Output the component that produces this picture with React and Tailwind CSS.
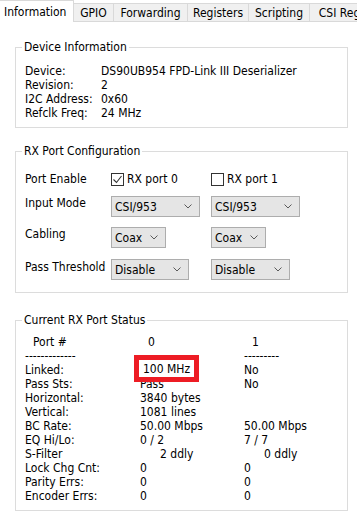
import React from 'react';

const tabs = [
  { name: 'GPIO', w: 'w-[40px]' },
  { name: 'Forwarding', w: 'w-[74px]' },
  { name: 'Registers', w: 'w-[61px]' },
  { name: 'Scripting', w: 'w-[61px]' },
  { name: 'CSI Reg', w: 'w-[60px]' },
];

const Chevron = () => (
  <svg width="8" height="5" viewBox="0 0 8 5" className="shrink-0">
    <path d="M0.5 0.5 L4 4 L7.5 0.5" fill="none" stroke="#5a5a5a" strokeWidth="1" />
  </svg>
);

const Select = ({ value, w }) => (
  <div className={`${w} h-[21px] bg-[#e5e5e5] border border-[#adadad] flex items-center justify-between pl-[3px] pr-[7px]`}>
    <span>{value}</span>
    <Chevron />
  </div>
);

const Check = ({ checked, label }) => (
  <div className="flex items-center gap-[3px]">
    <div className="w-[13px] h-[13px] border border-[#333] bg-white flex items-center justify-center">
      {checked && (
        <svg width="11" height="11" viewBox="0 0 11 11">
          <path d="M1.5 5.5 L4.5 8.5 L9.5 2" fill="none" stroke="#333" strokeWidth="1.1" />
        </svg>
      )}
    </div>
    <span>{label}</span>
  </div>
);

const Group = ({ title, className, children }) => (
  <fieldset className={`border border-[#dcdcdc] ${className}`}>
    <legend className="ml-[6px] px-[2px] leading-[14px]">{title}</legend>
    {children}
  </fieldset>
);

const status = [
  ['Pass Sts:', 'Pass', 'No'],
  ['Horizontal:', '3840 bytes', ''],
  ['Vertical:', '1081 lines', ''],
  ['BC Rate:', '50.00 Mbps', '50.00 Mbps'],
  ['EQ Hi/Lo:', '0 / 2', '7 / 7'],
];
const status2 = [
  ['Lock Chg Cnt:', '0', '0'],
  ['Parity Errs:', '0', '0'],
  ['Encoder Errs:', '0', '0'],
];

export default function App() {
  return (
    <div className="w-[357px] h-[520px] bg-white overflow-hidden text-black text-[12px] leading-[14px] font-['DejaVu_Sans_Condensed','DejaVu_Sans',sans-serif]">
      <div className="flex h-[22px] items-end whitespace-nowrap overflow-hidden">
        <div className="w-[74px] h-[22px] bg-white border-r border-t border-[#d9d9d9] pl-[4px] pt-[4px] shrink-0">Information</div>
        {tabs.map(t => (
          <div key={t.name} className={`${t.w} h-[19px] bg-[#f0f0f0] border-t border-b border-r border-[#d9d9d9] flex items-center justify-center shrink-0`}>
            {t.name}
          </div>
        ))}
      </div>

      <div className="pl-[15px] w-[348px]">
        <Group title="Device Information" className="mt-[18px] pb-[7px]">
          <div className="pl-[9px] pt-[10px] grid grid-cols-[76px_1fr]">
            <span>Device:</span><span>DS90UB954 FPD-Link III Deserializer</span>
            <span>Revision:</span><span>2</span>
            <span>I2C Address:</span><span>0x60</span>
            <span>Refclk Freq:</span><span>24 MHz</span>
          </div>
        </Group>

        <Group title="RX Port Configuration" className="mt-[16px] pb-[12px]">
          <div className="pl-[9px] pt-[14px] flex flex-col">
            <div className="flex items-center h-[14px]">
              <span className="w-[86px]">Port Enable</span>
              <div className="w-[100px]"><Check checked label="RX port 0" /></div>
              <Check label="RX port 1" />
            </div>
            <div className="flex items-start mt-[10px]">
              <span className="w-[86px]">Input Mode</span>
              <div className="w-[100px]"><Select value="CSI/953" w="w-[89px]" /></div>
              <Select value="CSI/953" w="w-[89px]" />
            </div>
            <div className="flex items-start mt-[10px]">
              <span className="w-[86px]">Cabling</span>
              <div className="w-[100px]"><Select value="Coax" w="w-[55px]" /></div>
              <Select value="Coax" w="w-[55px]" />
            </div>
            <div className="flex items-start mt-[11px]">
              <span className="w-[86px] pt-[1px] whitespace-nowrap">Pass Threshold</span>
              <div className="w-[100px]"><Select value="Disable" w="w-[78px]" /></div>
              <Select value="Disable" w="w-[79px]" />
            </div>
          </div>
        </Group>

        <Group title="Current RX Port Status" className="mt-[20px] pb-[7px]">
          <div className="pl-[9px] pt-[8px] flex flex-col whitespace-pre">
            <div className="grid grid-cols-[115px_104px_1fr]">
              <span className="pl-[8px]">Port #</span>
              <span className="pl-[8px]">0</span>
              <span className="pl-[8px]">1</span>
            </div>
            <div className="grid grid-cols-[115px_104px_1fr]">
              <span>-------------</span>
              <span></span>
              <span>---------</span>
            </div>
            <div className="grid grid-cols-[115px_104px_1fr] relative">
              <span>Linked:</span>
              <span></span>
              <span>No</span>
              <div className="absolute left-[109px] top-[-8px] w-[65px] h-[27px] border-[5px] border-[#ed1c24] bg-white flex items-center pl-[4px] pt-[1px] z-10">100 MHz</div>
            </div>
            {status.map(r => (
              <div key={r[0]} className="grid grid-cols-[115px_104px_1fr]">
                <span>{r[0]}</span><span>{r[1]}</span><span>{r[2]}</span>
              </div>
            ))}
            <div className="grid grid-cols-[115px_104px_1fr]">
              <span>S-Filter</span>
              <span className="pl-[20px]">2 ddly</span>
              <span className="pl-[20px]">0 ddly</span>
            </div>
            {status2.map(r => (
              <div key={r[0]} className="grid grid-cols-[115px_104px_1fr]">
                <span>{r[0]}</span><span>{r[1]}</span><span>{r[2]}</span>
              </div>
            ))}
          </div>
        </Group>
      </div>
    </div>
  );
}
